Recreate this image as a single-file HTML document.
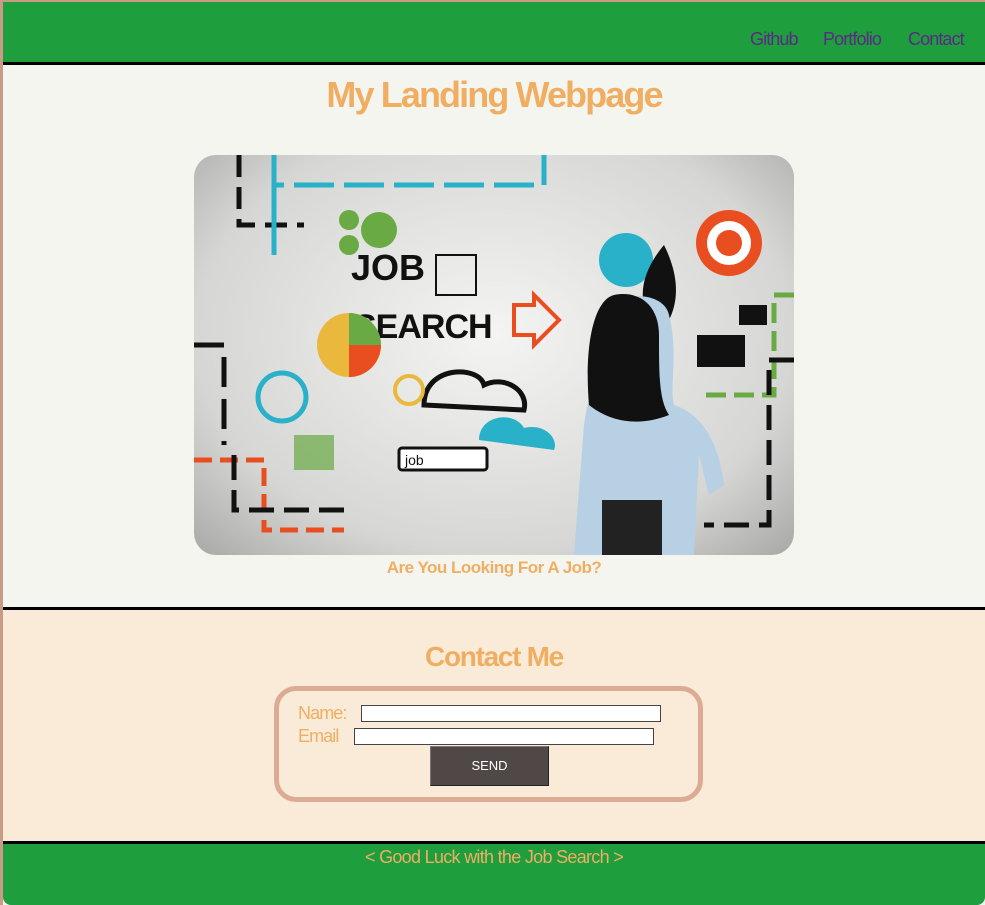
<!DOCTYPE html>
<html><head><style>
*{margin:0;padding:0;box-sizing:border-box}
body{width:985px;height:905px;overflow:hidden;background:#c99a86;font-family:"Liberation Sans",sans-serif;position:relative}
.wrap{position:absolute;left:3px;top:2px;width:982px;height:903px;background:#f5f5f0}
header{position:absolute;left:0;top:0;width:982px;height:63px;background:#1e9e3d;border-bottom:3px solid #000}
nav a{position:absolute;top:27px;font-size:18px;color:#5b2a86;text-decoration:none;letter-spacing:-0.9px}
h1{position:absolute;top:72px;left:0;width:982px;text-align:center;font-size:36px;color:#f0ae62;letter-spacing:-1.9px}
.img{position:absolute;left:191px;top:153px;width:600px;height:400px;border-radius:22px;overflow:hidden;background:radial-gradient(ellipse at 50% 45%,#f4f4f2,#d6d6d4 70%,#a8a8a6)}
.cap{position:absolute;top:556px;left:0;width:982px;text-align:center;font-weight:bold;font-size:17px;color:#f0ae62;letter-spacing:-0.5px}
.contact{position:absolute;left:0;top:605px;width:982px;height:237px;background:#faebd8;border-top:3px solid #000;border-bottom:3px solid #000}
h2{position:absolute;top:31px;left:0;width:982px;text-align:center;font-size:28px;color:#f0ae62;letter-spacing:-1.3px}
.form{position:absolute;left:271px;top:76px;width:429px;height:116px;border:5px solid #dcab94;border-radius:22px}
.lbl{position:absolute;font-size:18px;color:#f0ae62;letter-spacing:-0.9px}
.inp{position:absolute;height:17px;background:#fff;border:1px solid #444}
.btn{position:absolute;left:151px;top:55px;width:119px;height:40px;background:#504846;border:1px solid #222;border-top-color:#777;border-left-color:#777;color:#fff;font-size:13px;text-align:center;line-height:38px}
footer{position:absolute;left:0;top:842px;width:982px;height:61px;background:#1e9e3d;border-radius:0 0 8px 8px}
footer p{text-align:center;font-size:18px;color:#f0ae62;padding-top:3px;letter-spacing:-0.7px}
</style></head><body>
<div class="wrap">
<header><nav><a style="left:747px">Github</a><a style="left:820px">Portfolio</a><a style="left:905px">Contact</a></nav></header>
<h1>My Landing Webpage</h1>
<div class="img">
<svg width="600" height="400" viewBox="0 0 600 400">
<g fill="none" stroke-width="5">
<path d="M45 0V70H110" stroke="#111" stroke-dasharray="22 10"/>
<path d="M80 0V30H350V0" stroke="#29b1c9" stroke-dasharray="40 10"/>
<path d="M80 30V100" stroke="#29b1c9"/>
<path d="M0 190H30V290" stroke="#111" stroke-dasharray="30 12"/>
<path d="M0 305H70V375H150" stroke="#e84e1f" stroke-dasharray="18 8"/>
<path d="M40 300V355H150" stroke="#111" stroke-dasharray="25 10"/>
<path d="M600 140H580V240H505" stroke="#6aaa44" stroke-dasharray="20 8"/>
<path d="M600 205H575V370H510" stroke="#111" stroke-dasharray="25 10"/>
</g>
<circle cx="185" cy="75" r="18" fill="#6aaa44"/><circle cx="155" cy="65" r="10" fill="#6aaa44"/><circle cx="155" cy="90" r="10" fill="#6aaa44"/>
<text x="157" y="125" font-family="Liberation Sans" font-weight="bold" font-size="36" fill="#111">JOB</text>
<text x="160" y="183" font-family="Liberation Sans" font-weight="bold" font-size="34" fill="#111" letter-spacing="-1">SEARCH</text>
<path d="M320 150h20v-10l25 25-25 25v-10h-20z" fill="none" stroke="#e84e1f" stroke-width="4"/>
<circle cx="155" cy="190" r="32" fill="#e9b83c"/><path d="M155 190V158A32 32 0 0 1 187 190z" fill="#6aaa44"/><path d="M155 190h32A32 32 0 0 1 155 222z" fill="#e84e1f"/>
<circle cx="88" cy="242" r="24" fill="none" stroke="#29b1c9" stroke-width="5"/>
<path d="M230 250c0-40 55-40 60-20c20-10 45 5 40 25z" fill="none" stroke="#111" stroke-width="5"/>
<path d="M285 285c0-25 35-30 45-12c20-5 35 10 30 22z" fill="#29b1c9"/>
<circle cx="215" cy="235" r="14" fill="none" stroke="#e9b83c" stroke-width="4"/>
<rect x="205" y="293" width="88" height="22" rx="3" fill="#fff" stroke="#111" stroke-width="3"/>
<text x="211" y="310" font-family="Liberation Sans" font-size="14" fill="#111">job</text>
<circle cx="432" cy="105" r="27" fill="#29b1c9"/>
<path d="M470 90c15 30 15 55 5 75h-20c-10-20-10-45 15-75z" fill="#111"/><path d="M460 168l5 15 8-15z" fill="#e84e1f"/>
<circle cx="535" cy="88" r="33" fill="#e84e1f"/><circle cx="535" cy="88" r="22" fill="#fff"/><circle cx="535" cy="88" r="13" fill="#e84e1f"/>
<rect x="503" y="180" width="48" height="32" fill="#111"/><rect x="545" y="150" width="28" height="20" fill="#111"/>
<rect x="100" y="280" width="40" height="35" fill="#6aaa44" opacity=".7"/><rect x="242" y="100" width="40" height="40" fill="none" stroke="#111" stroke-width="2"/>
<path d="M380 400l10-130c5-40 20-60 25-110c5-25 55-25 60 0c10 40 0 70 5 90c30 10 45 40 50 80l-15 10-10-40-5 100z" fill="#b8d0e4"/>
<path d="M395 250c-5-60 5-105 25-110c25-5 45 10 45 40c0 40 0 65 10 80c-25 10-55 10-80-10z" fill="#111"/>
<rect x="408" y="345" width="60" height="55" fill="#222"/>
</svg>
</div>
<div class="cap">Are You Looking For A Job?</div>
<div class="contact">
<h2>Contact Me</h2>
<div class="form">
<div class="lbl" style="left:19px;top:12px">Name:</div>
<div class="inp" style="left:82px;top:14px;width:300px"></div>
<div class="lbl" style="left:19px;top:35px">Email</div>
<div class="inp" style="left:75px;top:37px;width:300px"></div>
<div class="btn">SEND</div>
</div>
</div>
<footer><p>&lt; Good Luck with the Job Search &gt;</p></footer>
</div>
</body></html>
